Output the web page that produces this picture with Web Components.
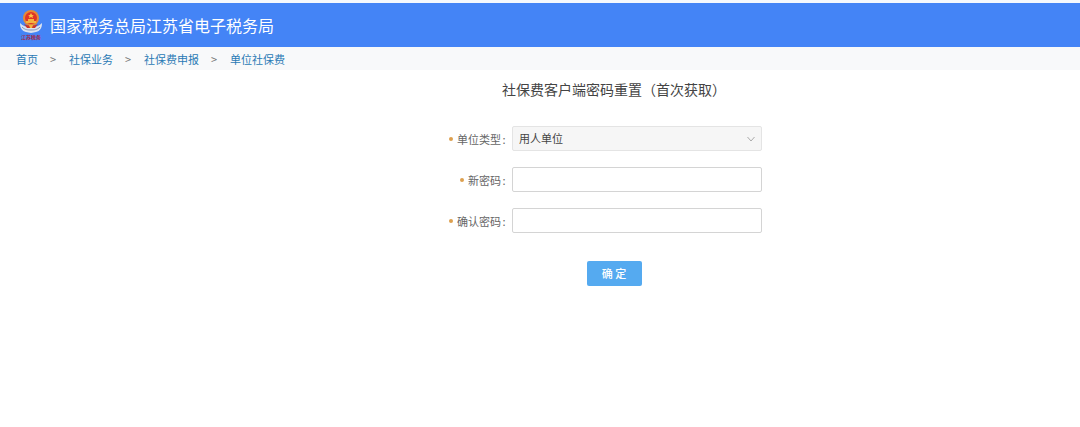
<!DOCTYPE html>
<html lang="zh-CN">
<head>
<meta charset="utf-8">
<title>国家税务总局江苏省电子税务局</title>
<style>
  body {
    margin: 0;
    background: #fff;
    color: #555;
    font: 11px/16px "Noto Sans CJK SC", sans-serif;
  }
</style>
</head>
<body>
<tax-page></tax-page>

<script>
class TaxEmblem extends HTMLElement {
  constructor() {
    super();
    this.attachShadow({ mode: 'open' });
  }

  connectedCallback() {
    this.shadowRoot.innerHTML = `
      <style>
        :host {
          display: flex;
          flex-direction: column;
          align-items: center;
          width: 22px;
          color: #a5263f;
          font-size: 5px;
          line-height: 6px;
          font-weight: 700;
        }
        svg { display: block; }
      </style>
      <svg width="22" height="24" viewBox="0 0 22 24" aria-hidden="true">
        <path d="M0 13c3 3 6 4 11 4s8-1 11-4c0 5-2 8-6 9l-5 1-5-1c-4-1-6-4-6-9z" fill="#dde3ef"/>
        <path d="M2 17c3 3 6 3 9 3s6 0 9-3" fill="none" stroke="#8396bd"/>
        <circle cx="11" cy="8" r="8" fill="#e58a35"/>
        <circle cx="11" cy="8" r="6" fill="#de3428"/>
        <path d="M11 3l1 2h2l-1.500 1 .5 2-2-1-2 1 .5-2L8 5h2z" fill="#ffc545"/>
        <path d="M6 11h10v2H6zM8 9h6v2H8z" fill="#f4b33f"/>
        <path d="M4 14c4 2 10 2 14 0l-3 4H7z" fill="#cc3429"/>
        <path d="M9 15h4l-1 3h-2z" fill="#f4b33f"/>
      </svg>
      <span>江苏税务</span>
    `;
  }
}
customElements.define('tax-emblem', TaxEmblem);

class TaxHeader extends HTMLElement {
  constructor() {
    super();
    this.attachShadow({ mode: 'open' });
  }

  connectedCallback() {
    this.shadowRoot.innerHTML = `
      <style>
        :host { display: block; }
        header {
          display: flex;
          align-items: center;
          gap: 8px;
          padding: 7px 20px;
          border-top: 3px solid #f5f8fd;
          background: #4484f6;
        }
        h1 {
          margin: 0;
          color: #fff;
          font-size: 16px;
          line-height: 24px;
          font-weight: 400;
        }
      </style>
      <header>
        <tax-emblem></tax-emblem>
        <h1><slot></slot></h1>
      </header>
    `;
  }
}
customElements.define('tax-header', TaxHeader);

class CrumbTrail extends HTMLElement {
  constructor() {
    super();
    this.attachShadow({ mode: 'open' });
  }

  connectedCallback() {
    const items = this.getAttribute('items').split(',');
    this.shadowRoot.innerHTML = `
      <style>
        :host { display: block; background: #f8f9fa; }
        ol {
          display: flex;
          gap: 12px;
          margin: 0;
          padding: 4px 16px 3px;
          list-style: none;
        }
        li { display: flex; gap: 12px; }
        li + li::before {
          content: ">";
          width: 7px;
          color: #777;
        }
        a { color: #2a7ab5; text-decoration: none; }
      </style>
      <nav aria-label="当前位置">
        <ol>${items.map(item => `<li><a href="#">${item}</a></li>`).join('')}</ol>
      </nav>
    `;
  }
}
customElements.define('crumb-trail', CrumbTrail);

class FormField extends HTMLElement {
  constructor() {
    super();
    this.attachShadow({ mode: 'open' });
  }

  connectedCallback() {
    const option = this.getAttribute('option');
    const control = option
      ? `<select id="control"><option>${option}</option></select>
         <svg width="8" height="6" viewBox="0 0 8 6" aria-hidden="true">
           <path d="M.5 1L4 5l3.500-4" fill="none" stroke="#aaa"/>
         </svg>`
      : `<input id="control" type="password">`;
    this.shadowRoot.innerHTML = `
      <style>
        :host {
          display: grid;
          grid-template-columns: 1fr 250px;
          align-items: center;
          gap: 5px;
        }
        label {
          display: flex;
          justify-content: flex-end;
          align-items: center;
          color: #666;
        }
        label::before {
          content: "";
          width: 4px;
          height: 4px;
          margin-right: 4px;
          border-radius: 2px;
          background: #dda04f;
        }
        label span { width: 6px; text-align: center; }
        .box { display: grid; align-items: center; }
        .box > * { grid-area: 1 / 1; }
        input, select {
          width: 100%;
          height: 25px;
          box-sizing: border-box;
          margin: 0;
          padding: 0 6px 2px;
          border: 1px solid #d4d4d4;
          border-radius: 2px;
          background: #fff;
          color: #444;
          font: inherit;
          outline: none;
        }
        select {
          appearance: none;
          border-color: #e4e4e4;
          background: #f6f6f6;
        }
        input:focus { border-color: #57aaf0; }
        svg {
          justify-self: end;
          margin-right: 7px;
          pointer-events: none;
        }
      </style>
      <label for="control"><slot></slot><span>:</span></label>
      <div class="box">${control}</div>
    `;
  }
}
customElements.define('form-field', FormField);

class PasswordReset extends HTMLElement {
  constructor() {
    super();
    this.attachShadow({ mode: 'open' });
  }

  connectedCallback() {
    this.shadowRoot.innerHTML = `
      <style>
        :host {
          display: flex;
          justify-content: center;
          padding: 8px 0 24px 148px;
        }
        form {
          display: flex;
          flex-direction: column;
          align-items: center;
          width: 400px;
        }
        h2 {
          margin: 0 0 26px;
          color: #444;
          font-size: 14px;
          line-height: 22px;
          font-weight: 400;
          white-space: nowrap;
        }
        .fields {
          display: flex;
          flex-direction: column;
          gap: 16px;
          align-self: stretch;
          padding-right: 52px;
        }
        button {
          margin-top: 28px;
          padding: 0 14px 2px;
          min-width: 55px;
          height: 25px;
          border: 0;
          border-radius: 2px;
          background: #55aaf0;
          color: #fff;
          font: inherit;
          font-weight: 500;
          white-space: nowrap;
          cursor: pointer;
        }
      </style>
      <form>
        <h2>社保费客户端密码重置（首次获取）</h2>
        <div class="fields">
          <form-field option="用人单位">单位类型</form-field>
          <form-field>新密码</form-field>
          <form-field>确认密码</form-field>
        </div>
        <button type="button">确 定</button>
      </form>
    `;
  }
}
customElements.define('password-reset', PasswordReset);

class TaxPage extends HTMLElement {
  constructor() {
    super();
    this.attachShadow({ mode: 'open' });
  }

  connectedCallback() {
    this.shadowRoot.innerHTML = `
      <style>
        :host { display: block; }
      </style>
      <tax-header>国家税务总局江苏省电子税务局</tax-header>
      <crumb-trail items="首页,社保业务,社保费申报,单位社保费"></crumb-trail>
      <main><password-reset></password-reset></main>
    `;
  }
}
customElements.define('tax-page', TaxPage);
</script>
</body>
</html>
